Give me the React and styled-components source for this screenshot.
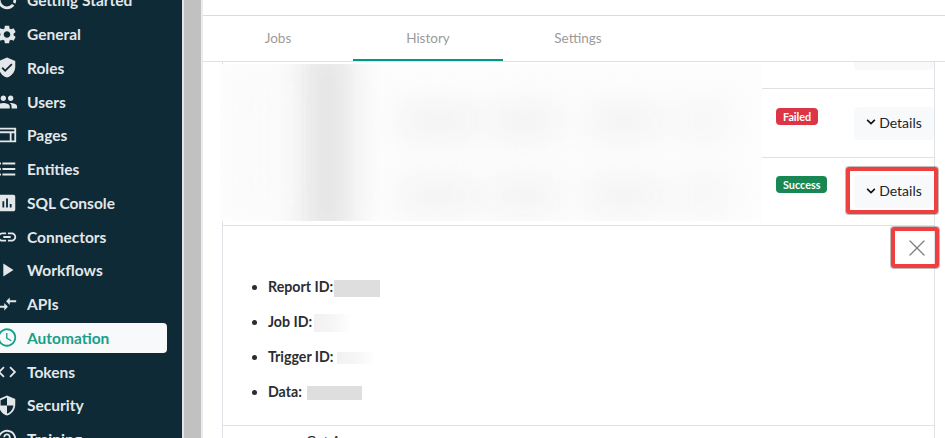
import styled, { createGlobalStyle } from "styled-components";
import {
  MdAccessTime,
  MdAssessment,
  MdCode,
  MdCompareArrows,
  MdDataUsage,
  MdFormatListBulleted,
  MdHelpOutline,
  MdLink,
  MdPeople,
  MdPlayArrow,
  MdSecurity,
  MdSettings,
  MdVerifiedUser,
} from "react-icons/md";
import { FaChevronDown } from "react-icons/fa";
import { X } from "lucide-react";

const GlobalStyle = createGlobalStyle`
  html, body {
    margin: 0;
    padding: 0;
    height: 100%;
    overflow: hidden;
    background: #fff;
    font-family: "Lato", "Open Sans", sans-serif;
  }
  * { box-sizing: border-box; }
`;

const PagesIcon = () => (
  <svg viewBox="0 0 24 24" width="22" height="22" fill="currentColor">
    <path d="M2 4h20v16H2zM4 10v8h11v-8zm13 0v8h3v-8zM4 6v2h16V6z" fillRule="evenodd" />
  </svg>
);

const menu = [
  { label: "Getting Started", icon: <MdDataUsage size={22} /> },
  { label: "General", icon: <MdSettings size={23} /> },
  { label: "Roles", icon: <MdVerifiedUser size={23} /> },
  { label: "Users", icon: <MdPeople size={22} /> },
  { label: "Pages", icon: <PagesIcon /> },
  { label: "Entities", icon: <MdFormatListBulleted size={22} /> },
  { label: "SQL Console", icon: <MdAssessment size={22} /> },
  { label: "Connectors", icon: <MdLink size={22} /> },
  { label: "Workflows", icon: <MdPlayArrow size={30} /> },
  { label: "APIs", icon: <MdCompareArrows size={22} /> },
  { label: "Automation", icon: <MdAccessTime size={23} />, active: true },
  { label: "Tokens", icon: <MdCode size={22} /> },
  { label: "Security", icon: <MdSecurity size={23} /> },
  { label: "Training", icon: <MdHelpOutline size={22} /> },
];

const smudges = [
  { left: 84, top: -20, w: 46, h: 200, tone: "#e2e2e2" },
  { left: 20, top: 20, w: 40, h: 120, tone: "#f9f9f9" },
  { left: 180, top: 44, w: 75, h: 26, tone: "#eeeeee" },
  { left: 180, top: 118, w: 75, h: 26, tone: "#efefef" },
  { left: 272, top: 44, w: 66, h: 26, tone: "#eeeeee" },
  { left: 272, top: 118, w: 66, h: 26, tone: "#efefef" },
  { left: 368, top: 44, w: 72, h: 26, tone: "#efefef" },
  { left: 368, top: 118, w: 72, h: 26, tone: "#efefef" },
  { left: 460, top: 44, w: 46, h: 26, tone: "#f1f1f1" },
  { left: 460, top: 118, w: 46, h: 26, tone: "#f1f1f1" },
];

const App = () => {
  return (
    <Page>
      <GlobalStyle />
      <Sidebar>
        <Menu>
          {menu.map((item) => (
            <MenuItem key={item.label} $active={item.active}>
              <MenuIcon>{item.icon}</MenuIcon>
              <MenuLabel>{item.label}</MenuLabel>
            </MenuItem>
          ))}
        </Menu>
      </Sidebar>
      <ScrollTrack />
      <Main>
        <TopBar />
        <Tabs>
          <Tab>Jobs</Tab>
          <Tab $active>History</Tab>
          <Tab>Settings</Tab>
        </Tabs>
        <Card>
          <BlurPanel>
            {smudges.map((s, i) => (
              <Smudge key={i} $left={s.left} $top={s.top} $w={s.w} $h={s.h} $tone={s.tone} />
            ))}
          </BlurPanel>
          <Row $height={27}>
            <CutButton />
          </Row>
          <Row $height={69}>
            <Badge $tone="#dc3545">Failed</Badge>
            <DetailsButton>
              <FaChevronDown size={10} />
              Details
            </DetailsButton>
          </Row>
          <Row $height={68}>
            <Badge $tone="#198754">Success</Badge>
            <DetailsButton>
              <FaChevronDown size={10} />
              Details
            </DetailsButton>
            <RedBox $top={9} $right={-4} $w={92} $h={47} />
          </Row>
          <Detail>
            <CloseIcon>
              <X size={28} strokeWidth={1.1} />
            </CloseIcon>
            <RedBox $top={1} $right={-5} $w={48} $h={41} />
            <DetailList>
              <li>
                Report ID:<Redacted $w={46} $h={17} $left={1} $tone="#dedede" />
              </li>
              <li>
                Job ID:<Redacted $w={38} $h={18} $left={2} $fade />
              </li>
              <li>
                Trigger ID:<Redacted $w={38} $h={12} $left={4} $fade />
              </li>
              <li>
                Data:<Redacted $w={55} $h={14} $left={5} $tone="#dedede" />
              </li>
            </DetailList>
          </Detail>
          <LastRow>Get A</LastRow>
        </Card>
      </Main>
    </Page>
  );
};

const Page = styled.div`
  display: flex;
  width: 945px;
  height: 438px;
  overflow: hidden;
`;

const Sidebar = styled.aside`
  flex: 0 0 184px;
  height: 438px;
  overflow: hidden;
  background: #0d2a36;
  border-right: 2px solid #e4e4e4;
`;

const Menu = styled.nav`
  display: flex;
  flex-direction: column;
  margin-top: -16.6px;
  width: 167px;
`;

const MenuItem = styled.div`
  position: relative;
  display: flex;
  align-items: center;
  flex: 0 0 33.77px;
  height: 33.77px;
  padding-left: 27px;
  font-size: 15.5px;
  font-weight: 700;
  white-space: nowrap;
  color: ${(p) => (p.$active ? "#17a08a" : "#e3e7e9")};

  &::before {
    content: "";
    display: ${(p) => (p.$active ? "block" : "none")};
    position: absolute;
    inset: 2px 0 2px -4px;
    background: #f8f9fa;
    border-radius: 4px;
  }
`;

const MenuLabel = styled.span`
  position: relative;
`;

const MenuIcon = styled.span`
  position: absolute;
  left: -4px;
  width: 22px;
  display: flex;
  justify-content: center;
`;

const ScrollTrack = styled.div`
  flex: 0 0 17px;
  background: #c1c1c1;
`;

const Main = styled.main`
  flex: 1;
  display: flex;
  flex-direction: column;
  background: #fff;
  border-left: 2px solid #ececec;
  min-width: 0;
`;

const TopBar = styled.div`
  flex: 0 0 16px;
  border-bottom: 1px solid #dcdcdc;
`;

const Tabs = styled.div`
  display: flex;
  flex: 0 0 46px;
  border-bottom: 1px solid #dee2e6;
`;

const Tab = styled.div`
  width: 150px;
  display: flex;
  align-items: center;
  justify-content: center;
  font-size: 13.5px;
  color: #9b9b9b;
  border-bottom: 2px solid ${(p) => (p.$active ? "#009688" : "transparent")};
  padding-top: 1px;
`;

const Card = styled.section`
  position: relative;
  margin-left: 19px;
  width: 713px;
  flex: 1;
  border-left: 1px solid #dee2e6;
  border-right: 1px solid #dee2e6;
  display: flex;
  flex-direction: column;
`;

const BlurPanel = styled.div`
  position: absolute;
  left: -3px;
  top: 2px;
  width: 542px;
  height: 157px;
  background: #fcfdfc;
  overflow: hidden;
  z-index: 2;
`;

const Smudge = styled.div`
  position: absolute;
  left: ${(p) => p.$left}px;
  top: ${(p) => p.$top}px;
  width: ${(p) => p.$w}px;
  height: ${(p) => p.$h}px;
  background: ${(p) => p.$tone};
  filter: blur(17px);
`;

const Row = styled.div`
  position: relative;
  flex: 0 0 ${(p) => p.$height}px;
  height: ${(p) => p.$height}px;
  border-bottom: 1px solid #dee2e6;
  display: flex;
  align-items: center;
  justify-content: space-between;
  padding-left: 553px;
`;

const CutButton = styled.div`
  position: absolute;
  right: 0;
  top: 0;
  width: 80px;
  height: 8px;
  background: #f8f9fa;
  border-radius: 0 0 4px 4px;
`;

const Badge = styled.span`
  position: relative;
  top: -7px;
  display: inline-block;
  background: ${(p) => p.$tone};
  color: #fff;
  font-size: 10.8px;
  font-weight: 700;
  line-height: 17px;
  padding: 0 7px;
  border-radius: 4px;
`;

const DetailsButton = styled.button`
  display: flex;
  align-items: center;
  justify-content: center;
  gap: 3px;
  width: 80px;
  height: 33px;
  padding: 0 0 2px;
  border: 0;
  border-radius: 4px;
  background: #f8f9fa;
  color: #212529;
  font-family: inherit;
  font-size: 14px;

  svg { color: #111; }
`;

const RedBox = styled.div`
  position: absolute;
  top: ${(p) => p.$top}px;
  right: ${(p) => p.$right}px;
  width: ${(p) => p.$w}px;
  height: ${(p) => p.$h}px;
  border: 4px solid #ef4040;
  border-radius: 3px;
  box-shadow: 0 0 0 1px rgba(90, 60, 60, 0.35);
  z-index: 3;
`;

const Detail = styled.div`
  position: relative;
  flex: 0 0 200px;
  height: 200px;
  border-bottom: 1px solid #dee2e6;
  padding: 52px 0 0 45px;
`;

const CloseIcon = styled.div`
  position: absolute;
  top: 8px;
  right: 3px;
  color: #7d7d7d;
  display: flex;
`;

const DetailList = styled.ul`
  margin: 0;
  padding: 0;
  list-style: disc;
  display: flex;
  flex-direction: column;
  gap: 17px;

  li {
    display: list-item;
    height: 18px;
    line-height: 18px;
    font-size: 14.2px;
    font-weight: 700;
    color: #2a2e33;
    white-space: nowrap;
  }
`;

const Redacted = styled.span`
  display: inline-block;
  vertical-align: middle;
  width: ${(p) => p.$w}px;
  height: ${(p) => p.$h}px;
  margin-left: ${(p) => p.$left}px;
  background: ${(p) =>
    p.$fade ? "linear-gradient(90deg, #f1f1f1 0%, #f6f6f6 50%, #ffffff 100%)" : p.$tone};
`;

const LastRow = styled.div`
  padding: 6px 0 0 83px;
  font-size: 14px;
  color: #333;
`;

export default App;
